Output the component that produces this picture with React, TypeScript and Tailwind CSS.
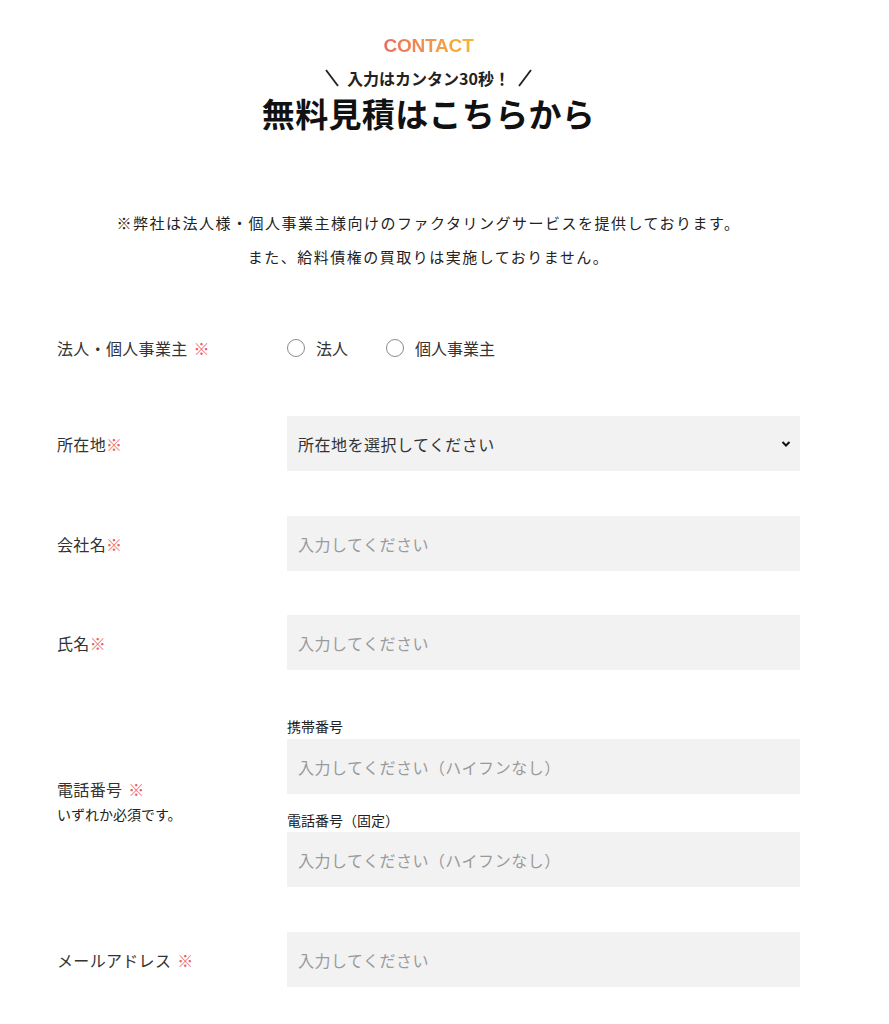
import React from 'react';

const jp = { fontFamily: '"Noto Sans CJK JP", "Noto Sans", sans-serif' };

const Req: React.FC<{ space?: boolean }> = ({ space }) => (
  <span className={`text-[#ee5e5e] ${space ? 'ml-[6px]' : ''}`}>※</span>
);

const Field: React.FC<{ placeholder?: string }> = ({ placeholder = '入力してください' }) => (
  <div className="h-[55px] w-full bg-[#f2f2f2] flex items-center px-[11px] text-[16px] text-[#9a9a9a] tracking-[0.03em]">
    {placeholder}
  </div>
);

const Row: React.FC<{ label: React.ReactNode; children: React.ReactNode }> = ({ label, children }) => (
  <div className="flex items-center">
    <div className="w-[230px] shrink-0 text-[16px] text-[#333] tracking-[0.02em]">{label}</div>
    <div className="flex-1">{children}</div>
  </div>
);

const Slash: React.FC<{ back?: boolean }> = ({ back }) => (
  <svg width="16" height="20" viewBox="0 0 16 20">
    {back ? (
      <path d="M2 2 L14 18" stroke="#222" strokeWidth="1.8" />
    ) : (
      <path d="M14 2 L2 18" stroke="#222" strokeWidth="1.8" />
    )}
  </svg>
);

export default function App() {
  return (
    <div className="min-h-screen bg-white text-[#222]" style={jp}>
      <div className="ml-[57px] w-[743px] pt-[34px] pb-[40px]">
        <div className="flex flex-col items-center">
          <div
            className="text-[19px] font-bold leading-[24px] bg-gradient-to-r from-[#ec6a5c] to-[#f5b82c] bg-clip-text text-transparent tracking-[-0.01em]"
            style={{ fontFamily: '"Liberation Sans", Arial, sans-serif' }}
          >
            CONTACT
          </div>
          <div className="mt-[9px] flex items-center text-[16px] font-bold leading-[22px] text-[#222]">
            <Slash back />
            <span className="ml-[7px] mr-[7px]">入力はカンタン30秒！</span>
            <Slash />
          </div>
          <h1 className="mt-[3px] text-[33px] font-bold leading-[42px] tracking-[0.01em] text-[#111]">
            無料見積はこちらから
          </h1>
        </div>

        <div className="mt-[72px] flex flex-col items-center text-[15px] leading-[34px] tracking-[0.1em] text-[#222]">
          <p>※弊社は法人様・個人事業主様向けのファクタリングサービスを提供しております。</p>
          <p>また、給料債権の買取りは実施しておりません。</p>
        </div>

        <div className="mt-[62px] flex flex-col">
          <Row label={<>法人・個人事業主<Req space /></>}>
            <div className="flex items-center text-[16px] text-[#333]">
              <span className="w-[18px] h-[18px] rounded-full border border-[#8a8a8a]" />
              <span className="ml-[11px]">法人</span>
              <span className="ml-[38px] w-[18px] h-[18px] rounded-full border border-[#8a8a8a]" />
              <span className="ml-[11px]">個人事業主</span>
            </div>
          </Row>

          <div className="mt-[56px]">
            <Row label={<>所在地<Req /></>}>
              <div className="h-[55px] w-full bg-[#f2f2f2] flex items-center justify-between pl-[11px] pr-[9px] text-[16px] text-[#333] tracking-[0.03em]">
                <span>所在地を選択してください</span>
                <svg width="10" height="8" viewBox="0 0 10 8">
                  <path d="M1.5 2 L5 5.5 L8.5 2" fill="none" stroke="#111" strokeWidth="2" />
                </svg>
              </div>
            </Row>
          </div>

          <div className="mt-[45px]">
            <Row label={<>会社名<Req /></>}>
              <Field />
            </Row>
          </div>

          <div className="mt-[44px]">
            <Row label={<>氏名<Req /></>}>
              <Field />
            </Row>
          </div>

          <div className="mt-[46px] flex items-center">
            <div className="w-[230px] shrink-0 text-[#333]">
              <div className="text-[16px] leading-[25px] tracking-[0.02em]">電話番号<Req space /></div>
              <div className="text-[14px] leading-[25px] text-[#222]">いずれか必須です。</div>
            </div>
            <div className="flex-1">
              <div className="text-[14px] leading-[20px] text-[#222]">携帯番号</div>
              <div className="mt-[3px]">
                <Field placeholder="入力してください（ハイフンなし）" />
              </div>
              <div className="mt-[15px] text-[14px] leading-[22px] text-[#222]">電話番号（固定）</div>
              <div className="mt-[1px]">
                <Field placeholder="入力してください（ハイフンなし）" />
              </div>
            </div>
          </div>

          <div className="mt-[45px]">
            <Row label={<>メールアドレス<Req space /></>}>
              <Field />
            </Row>
          </div>
        </div>
      </div>
    </div>
  );
}
